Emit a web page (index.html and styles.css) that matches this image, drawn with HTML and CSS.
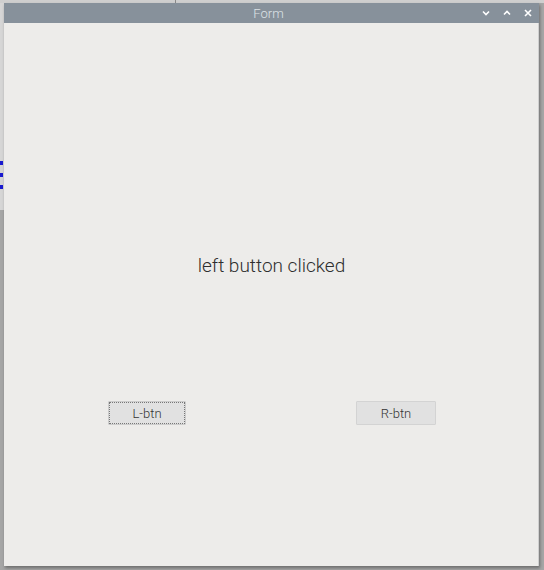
FILE: index.html
```html
<!DOCTYPE html>
<html>
<head>
<meta charset="utf-8">
<link rel="stylesheet" href="styles.css">
</head>
<body>
<div class="desktop">
  <div class="bg-top"><div class="bg-divider"></div></div>
  <div class="bg-left">
    <span class="mark m1"></span><span class="mark m2"></span><span class="mark m3"></span>
  </div>
  <div class="window">
    <div class="titlebar">
      <span class="title">Form</span>
      <div class="controls">
        <svg width="10" height="10" viewBox="0 0 10 10"><path d="M2 3.5 L5 6.5 L8 3.5" fill="none" stroke="#fff" stroke-width="1.6"/></svg>
        <svg width="10" height="10" viewBox="0 0 10 10"><path d="M2 6.5 L5 3.5 L8 6.5" fill="none" stroke="#fff" stroke-width="1.6"/></svg>
        <svg width="10" height="10" viewBox="0 0 10 10"><path d="M2 2 L8 8 M8 2 L2 8" fill="none" stroke="#fff" stroke-width="1.6"/></svg>
      </div>
    </div>
    <div class="content">
      <div class="label">left button clicked</div>
      <div class="buttons">
        <button class="btn focused">L-btn</button>
        <button class="btn right">R-btn</button>
      </div>
    </div>
  </div>
</div>
</body>
</html>
```
FILE: styles.css
```css
html, body {
  margin: 0;
  padding: 0;
}
body {
  width: 544px;
  height: 570px;
  overflow: hidden;
  background: #a6a6a6;
  font-family: Roboto, "Liberation Sans", sans-serif;
}
.desktop {
  position: relative;
  width: 544px;
  height: 570px;
}
.bg-top {
  position: absolute;
  left: 0;
  top: 0;
  width: 544px;
  height: 3px;
  background: #cfcfcf;
}
.bg-divider {
  position: absolute;
  left: 175px;
  top: 0;
  width: 1px;
  height: 3px;
  background: #8a8a8a;
}
.bg-left {
  position: absolute;
  left: 0;
  top: 3px;
  width: 4px;
  height: 207px;
  background: #d6d6d6;
}
.mark {
  position: absolute;
  left: 0;
  width: 3px;
  height: 4px;
  background: #1a1ad0;
}
.m1 { top: 158px; }
.m2 { top: 170px; }
.m3 { top: 182px; }
.window {
  position: absolute;
  left: 4px;
  top: 3px;
  width: 535px;
  height: 563px;
  display: flex;
  flex-direction: column;
  background: #edecea;
  box-shadow: 1px 2px 3px rgba(0,0,0,0.35);
}
.titlebar {
  height: 20px;
  background: #87919b;
  position: relative;
  display: flex;
  align-items: center;
  justify-content: center;
}
.title {
  color: #dde2e6;
  font-size: 13px;
  font-weight: 300;
  margin-left: -6px;
}
.controls {
  position: absolute;
  right: 6px;
  top: 5px;
  display: flex;
  gap: 11px;
}
.controls svg {
  display: block;
}
.content {
  flex: 1;
  display: flex;
  flex-direction: column;
  border-right: 1px solid #cfcfcf;
}
.label {
  margin-top: 231px;
  text-align: center;
  font-size: 19px;
  font-weight: 300;
  color: #2e2e2e;
  padding-left: 1px;
  line-height: 24px;
}
.buttons {
  margin-top: 123px;
  display: flex;
  padding-left: 104px;
}
.btn {
  font-family: Roboto, "Liberation Sans", sans-serif;
  font-size: 13px;
  font-weight: 300;
  color: #333333;
  background: #e1e1e1;
  border: 1px solid #d3d3d3;
  height: 24px;
  padding: 0;
  margin: 0;
  border-radius: 1px;
}
.btn.focused {
  width: 78px;
  outline: 1px dotted #777;
  outline-offset: -2px;
  border-color: #cccccc;
}
.btn.right {
  width: 80px;
  margin-left: 170px;
}
```
